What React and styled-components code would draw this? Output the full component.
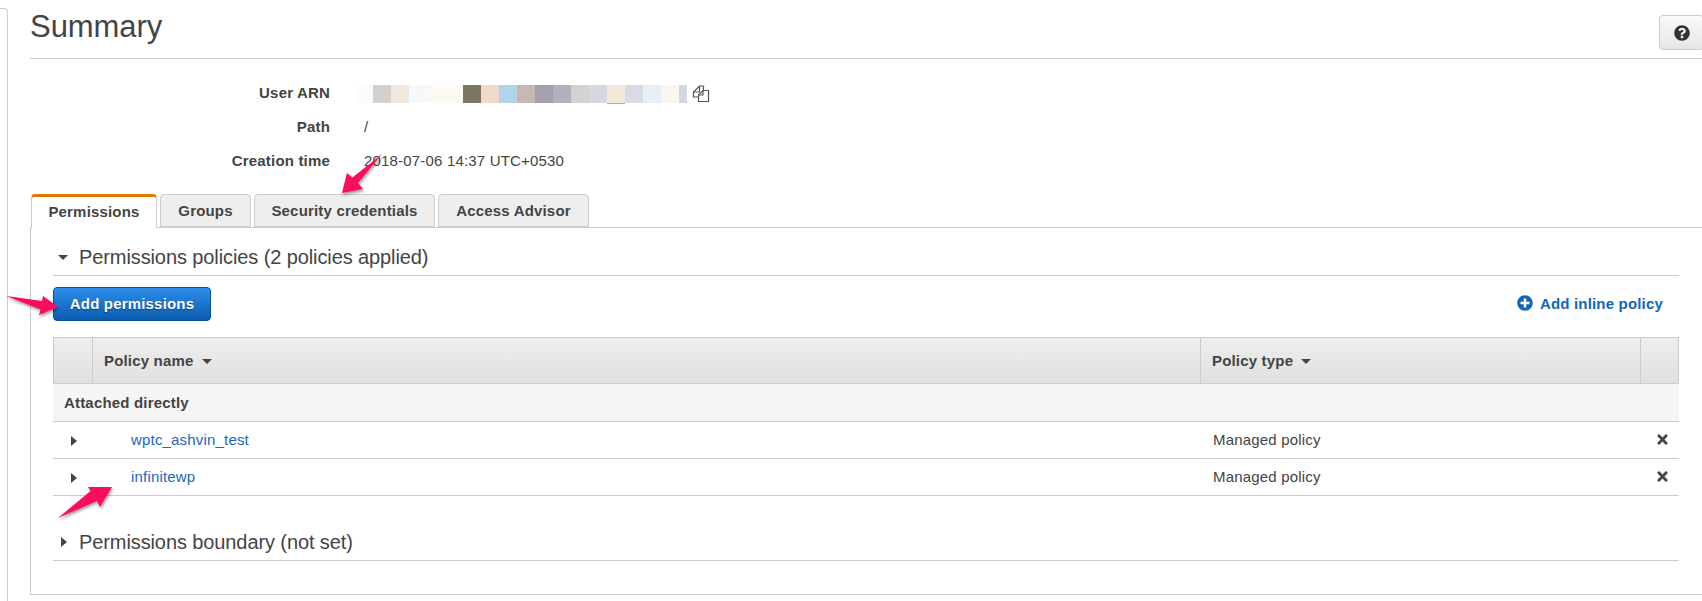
import React from 'react'
import styled, { createGlobalStyle } from 'styled-components'
import { FaQuestionCircle, FaPlusCircle, FaTimes } from 'react-icons/fa'

const GlobalStyle = createGlobalStyle`
html, body {
  margin: 0;
  padding: 0;
  background: #fff;
  overflow: hidden;
}
* { box-sizing: border-box; }
`

const swatches = [
  '#fefcfa', '#d2d1ce', '#f1e8df', '#f4f9fd', '#fcf9f4', '#fcf9f4', '#7b7562', '#f0dac7', '#b2d4ea',
  '#c7b8b2', '#a79eaf', '#b3b0bd', '#d3d3d0', '#d5d8e0', '#f3e9da', '#d8dbe3', '#e7eff6', '#f9f6f1',
]

const tabs = ['Permissions', 'Groups', 'Security credentials', 'Access Advisor']
const policies = ['wptc_ashvin_test', 'infinitewp']

function Arrow({ points }) {
  return (
    <ArrowSvg width="1702" height="601" viewBox="0 0 1702 601">
      <defs>
        <filter id="arrowShadow" x="-30%" y="-30%" width="160%" height="160%">
          <feDropShadow dx="1" dy="2" stdDeviation="1.6" floodColor="#000" floodOpacity="0.4" />
        </filter>
      </defs>
      <polygon points={points} fill="#f9095f" filter="url(#arrowShadow)" />
    </ArrowSvg>
  )
}

function CopyIcon() {
  return (
    <CopySvg width="18" height="18" viewBox="0 0 18 18" fill="#fff" stroke="#555" strokeWidth="1.2">
      <path d="M7.5 1 H11.5 V12 H1.5 V7 Z" />
      <path d="M1.5 7 H7.5 V1" fill="none" />
      <path d="M11 5.5 H16.5 V16.5 H6.5 V10 Z" />
      <path d="M6.5 10 H11 V5.5" fill="none" />
    </CopySvg>
  )
}

function App() {
  return (
    <>
      <GlobalStyle />
      <Page>
        <Rail />
        <Main>
          <Header>
            <Title>Summary</Title>
            <HelpButton><FaQuestionCircle /></HelpButton>
          </Header>

          <Meta>
            <Label>User ARN</Label>
            <Value>
              <Blurred>
                {swatches.map((c, i) => <Swatch key={i} $color={c} $underline={i === 14} />)}
                <Swatch $color="#d3d7e2" $narrow />
              </Blurred>
              <CopyIcon />
            </Value>
            <Label>Path</Label>
            <Value>/</Value>
            <Label>Creation time</Label>
            <Value>2018-07-06 14:37 UTC+0530</Value>
          </Meta>

          <TabBar>
            {tabs.map((t, i) => <Tab key={t} $active={i === 0} $w={[126, 91, 181, 151][i]}>{t}</Tab>)}
          </TabBar>

          <Panel>
            <SectionHead>
              <Caret $dir="down" />
              <SectionTitle>Permissions policies (2 policies applied)</SectionTitle>
            </SectionHead>

            <Toolbar>
              <PrimaryButton>Add permissions</PrimaryButton>
              <InlineLink><FaPlusCircle />Add inline policy</InlineLink>
            </Toolbar>

            <HeadRow>
              <HeadCell />
              <HeadCell>Policy name<SortCaret /></HeadCell>
              <HeadCell>Policy type<SortCaret /></HeadCell>
              <HeadCell />
            </HeadRow>
            <GroupRow>Attached directly</GroupRow>
            {policies.map(p => (
              <PolicyRow key={p}>
                <ExpandCell><Caret $dir="right" /></ExpandCell>
                <NameCell>{p}</NameCell>
                <TypeCell>Managed policy</TypeCell>
                <RemoveCell><FaTimes /></RemoveCell>
              </PolicyRow>
            ))}

            <SectionHead $gap>
              <Caret $dir="right" />
              <SectionTitle>Permissions boundary (not set)</SectionTitle>
            </SectionHead>
          </Panel>
        </Main>

        <Arrow points="382,154 358,183 363,189 342,193 347,173 352.5,177.5" />
        <Arrow points="6,296 42,301 43,296 58,307 39,315 40.5,309.5" />
        <Arrow points="58,518 90.5,491 88,487 112,487 100,507 97,501" />
      </Page>
    </>
  )
}

export default App

const Page = styled.div`
position: relative;
width: 1702px;
height: 601px;
display: flex;
overflow: hidden;
font-family: "Liberation Sans", Arial, sans-serif;
font-size: 15px;
letter-spacing: 0.18px;
color: #444;
`
const Rail = styled.div`
width: 8px;
height: 593px;
margin-top: 8px;
flex-shrink: 0;
border-top: 1px solid #ccc;
border-right: 1px solid #ccc;
border-top-right-radius: 4px;
`
const Main = styled.div`
flex: 1;
min-width: 0;
padding-left: 22px;
`
const Header = styled.div`
height: 59px;
display: flex;
justify-content: space-between;
border-bottom: 1px solid #ccc;
`
const Title = styled.h1`
margin: 9px 0 0;
font-size: 31px;
line-height: 36px;
font-weight: 400;
letter-spacing: -0.05px;
color: #444;
`
const HelpButton = styled.div`
width: 45px;
height: 35px;
margin-top: 15px;
margin-right: -2px;
display: flex;
align-items: center;
justify-content: center;
border: 1px solid #ccc;
border-radius: 4px;
background: linear-gradient(#fafafa, #e6e6e6);
color: #333;
font-size: 16px;
`
const Meta = styled.div`
display: grid;
grid-template-columns: 300px 1fr;
column-gap: 34px;
grid-auto-rows: 34px;
align-items: center;
padding-top: 16px;
`
const Label = styled.div`
text-align: right;
font-weight: 700;
`
const Value = styled.div`
display: flex;
align-items: center;
`
const Blurred = styled.div`
display: flex;
height: 18px;
margin-left: -9px;
margin-top: 4px;
`
const Swatch = styled.span`
display: block;
width: ${p => (p.$narrow ? '8px' : '18px')};
height: ${p => (p.$underline ? '19px' : '18px')};
background: ${p => p.$color};
border-bottom: ${p => (p.$underline ? '1px solid #d0aa70' : 'none')};
`
const CopySvg = styled.svg`
margin-left: 5px;
margin-top: 4px;
`
const TabBar = styled.div`
display: flex;
gap: 3px;
margin-top: 17px;
margin-left: 1px;
position: relative;
z-index: 1;
`
const Tab = styled.div`
width: ${p => p.$w}px;
height: ${p => (p.$active ? '34px' : '33px')};
display: flex;
align-items: center;
justify-content: center;
padding-bottom: ${p => (p.$active ? '3px' : '0')};
font-weight: 700;
border: 1px solid #ccc;
border-bottom: ${p => (p.$active ? 'none' : '1px solid #ccc')};
border-top: ${p => (p.$active ? '3px solid #e07b00' : '1px solid #ccc')};
border-radius: 4px 4px 0 0;
background: ${p => (p.$active ? '#fff' : '#eee')};
color: #444;
`
const Panel = styled.div`
height: 368px;
margin-top: -1px;
padding: 11px 23px 0 22px;
border: 1px solid #ccc;
border-right: none;
`
const SectionHead = styled.div`
height: 37px;
margin-top: ${p => (p.$gap ? '28px' : '0')};
display: flex;
align-items: center;
padding-left: 5px;
border-bottom: 1px solid #ccc;
`
const SectionTitle = styled.div`
margin-left: 11px;
font-size: 20px;
letter-spacing: -0.1px;
`
const Caret = styled.span`
display: block;
width: 0;
height: 0;
flex-shrink: 0;
${p => (p.$dir === 'down'
    ? 'border-left: 5px solid transparent; border-right: 5px solid transparent; border-top: 5px solid #444;'
    : 'margin: 0 1px 0 3px; border-top: 5px solid transparent; border-bottom: 5px solid transparent; border-left: 6px solid #444;')}
`
const Toolbar = styled.div`
display: flex;
justify-content: space-between;
align-items: center;
margin-top: 11px;
margin-bottom: 16px;
`
const PrimaryButton = styled.div`
width: 158px;
height: 34px;
display: flex;
align-items: center;
justify-content: center;
padding-bottom: 1px;
border: 1px solid #0b4f95;
border-radius: 4px;
background: linear-gradient(#2d8eeb, #0a5cae);
color: #fff;
font-weight: 700;
text-shadow: 0 1px 1px rgba(0, 0, 0, 0.4);
`
const InlineLink = styled.div`
display: flex;
align-items: center;
gap: 7px;
margin-right: 16px;
padding-bottom: 2px;
color: #1166bb;
font-weight: 700;
svg { font-size: 16px; }
`
const HeadRow = styled.div`
height: 47px;
display: grid;
grid-template-columns: 38px 1fr 440px 38px;
border: 1px solid #ccc;
background: linear-gradient(#eee, #e0e0e0);
`
const HeadCell = styled.div`
display: flex;
align-items: center;
padding-left: 11px;
font-weight: 700;
& + & { border-left: 1px solid #ccc; }
`
const SortCaret = styled.span`
display: block;
margin-left: 8px;
margin-top: 2px;
border-left: 5px solid transparent;
border-right: 5px solid transparent;
border-top: 5px solid #444;
`
const GroupRow = styled.div`
height: 38px;
display: flex;
align-items: center;
padding-left: 11px;
font-weight: 700;
background: #f5f5f5;
border-bottom: 1px solid #ccc;
`
const PolicyRow = styled.div`
height: 37px;
display: grid;
grid-template-columns: 39px 1fr 440px 39px;
align-items: center;
border-bottom: 1px solid #ccc;
`
const ExpandCell = styled.div`
display: flex;
padding-left: 15px;
margin-top: 2px;
`
const NameCell = styled.div`
padding-left: 39px;
padding-bottom: 2px;
color: #2268c0;
`
const TypeCell = styled.div`
padding-left: 13px;
padding-bottom: 2px;
`
const RemoveCell = styled.div`
display: flex;
justify-content: center;
padding-left: 5px;
padding-bottom: 1px;
color: #444;
font-size: 15px;
`
const ArrowSvg = styled.svg`
position: absolute;
left: 0;
top: 0;
z-index: 2;
pointer-events: none;
`
